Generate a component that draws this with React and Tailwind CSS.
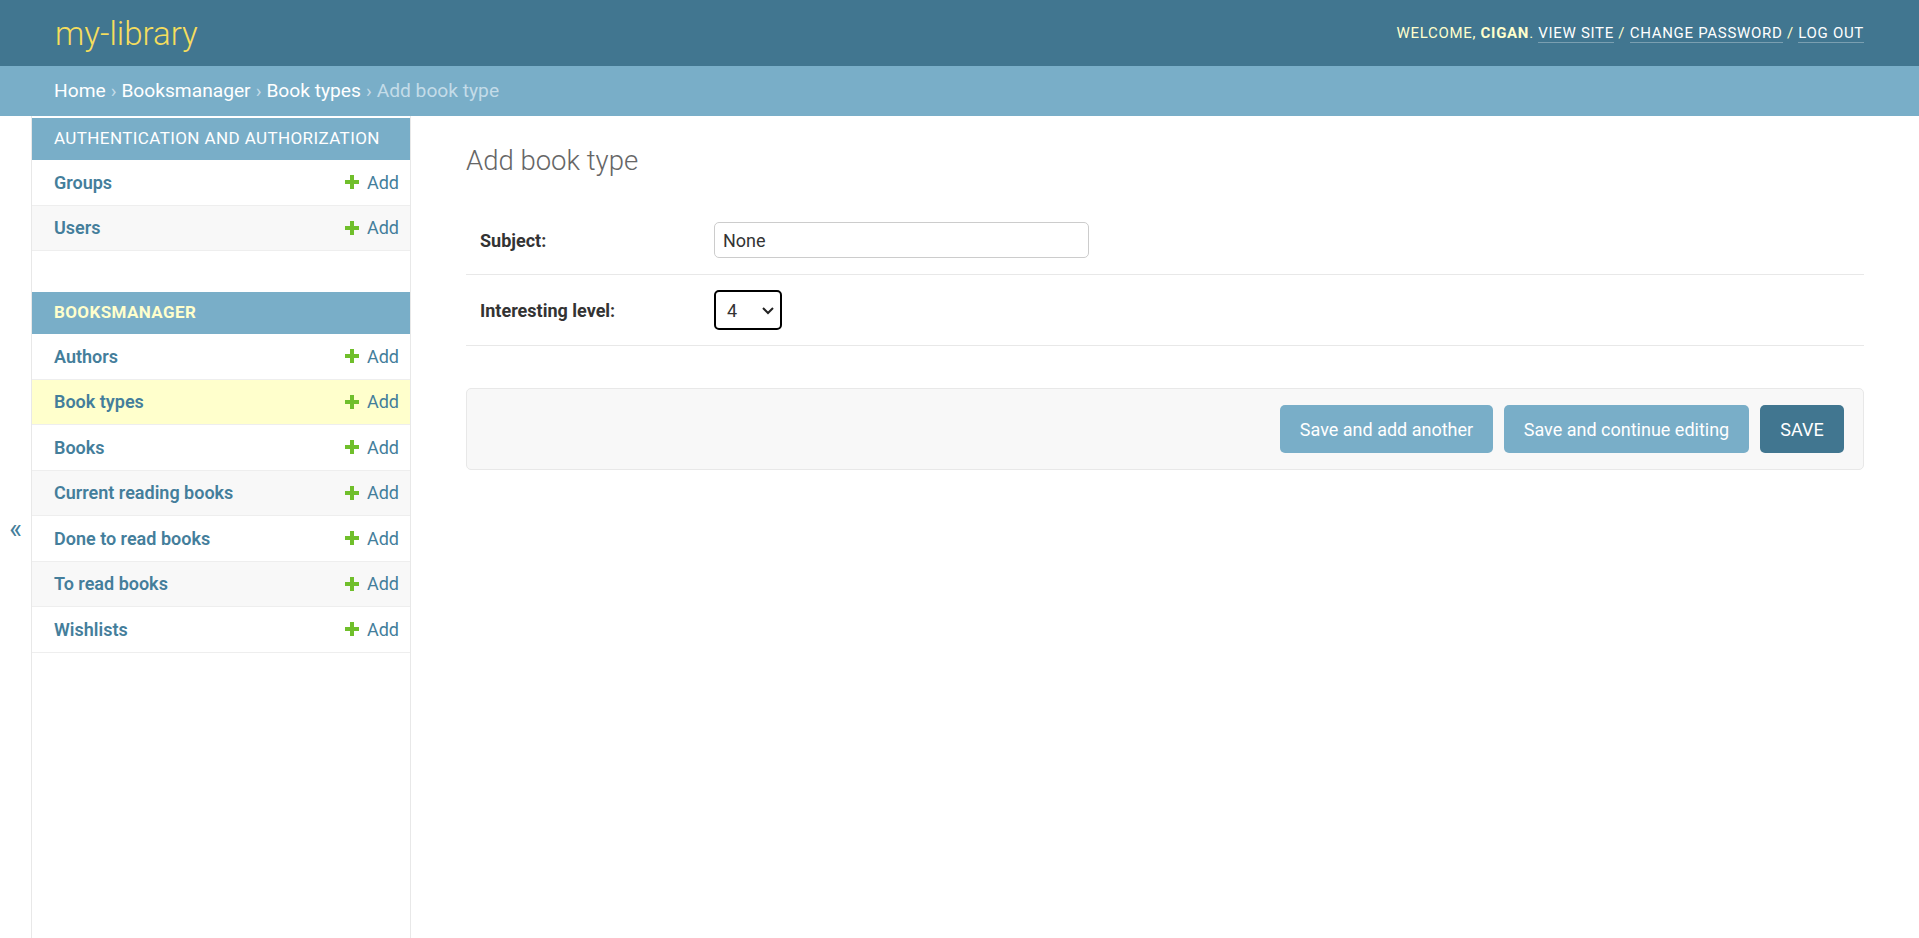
import React from "react";

const authModels = ["Groups", "Users"];
const bookModels = [
  "Authors",
  "Book types",
  "Books",
  "Current reading books",
  "Done to read books",
  "To read books",
  "Wishlists",
];

function PlusIcon() {
  return (
    <svg width="14" height="14" viewBox="0 0 14 14" className="shrink-0">
      <path d="M5 0h4v5h5v4H9v5H5V9H0V5h5z" fill="#70bf2b" />
    </svg>
  );
}

function ModelRow({ name, index, current }) {
  let bg = index % 2 === 0 ? "bg-white" : "bg-[#f8f8f8]";
  if (current) bg = "bg-[#ffffcc]";
  return (
    <div
      className={`flex items-center justify-between h-[45.5px] pl-[22px] pr-[11px] border-b-[1.5px] border-[#eeeeee] ${bg}`}
    >
      <a className="text-[18px] font-semibold text-[#447e9b] leading-[23px]">
        {name}
      </a>
      <a className="flex items-center gap-[8px] text-[18px] text-[#447e9b] leading-[23px]">
        <PlusIcon />
        Add
      </a>
    </div>
  );
}

function Module({ title, models, currentApp, currentModel }) {
  return (
    <div className="mb-[41px]">
      <div
        className={`h-[42px] flex items-center px-[22px] bg-[#79aec8] text-[17px] uppercase tracking-[0.4px] whitespace-nowrap ${
          currentApp ? "text-[#ffffcc] font-bold" : "text-white"
        }`}
      >
        {title}
      </div>
      {models.map((m, i) => (
        <ModelRow key={m} name={m} index={i} current={m === currentModel} />
      ))}
    </div>
  );
}

export default function App() {
  return (
    <div
      className="h-screen flex flex-col bg-white text-[#333]"
      style={{ fontFamily: "Roboto, 'Liberation Sans', sans-serif" }}
    >
      <header className="h-[66px] shrink-0 bg-[#417690] flex items-center justify-between px-[55px]">
        <div className="text-[33px] font-light text-[#f5dd5d] leading-none">
          my-library
        </div>
        <div className="text-[15px] uppercase tracking-[0.7px] text-[#ffffcc]">
          Welcome, <strong className="font-bold">cigan</strong>.{" "}
          <a className="text-white border-b border-white/30">View site</a> /{" "}
          <a className="text-white border-b border-white/30">Change password</a>{" "}
          / <a className="text-white border-b border-white/30">Log out</a>
        </div>
      </header>

      <div className="h-[50px] shrink-0 bg-[#79aec8] flex items-center px-[54px] text-[19.2px] text-[#c4dce8]">
        <a className="text-white">Home</a>
        <span className="mx-[5px]">›</span>
        <a className="text-white">Booksmanager</a>
        <span className="mx-[5px]">›</span>
        <a className="text-white">Book types</a>
        <span className="mx-[5px]">›</span>
        <span>Add book type</span>
      </div>

      <div className="flex flex-1 min-h-0">
        <button className="w-[32px] shrink-0 border-r border-[#e8e8e8] flex items-center justify-center text-[27px] leading-none text-[#447e9b] pt-[4px]">
          «
        </button>

        <nav className="w-[379px] shrink-0 border-r-[1.5px] border-[#e8e8e8] pt-[2px]">
          <Module title="Authentication and Authorization" models={authModels} />
          <Module
            title="Booksmanager"
            models={bookModels}
            currentApp
            currentModel="Book types"
          />
        </nav>

        <main className="flex-1 px-[55px] pt-[27px]">
          <h1 className="text-[27.5px] font-light text-[#666] leading-[34px] mt-[1px] mb-[28px]">
            Add book type
          </h1>

          <div className="border-b-[1.5px] border-[#e8e8e8] h-[69px] flex items-center px-[14px]">
            <label className="w-[234px] shrink-0 text-[18px] font-bold text-[#333]">
              Subject:
            </label>
            <input
              defaultValue="None"
              className="w-[375px] h-[36px] px-[8px] text-[18px] text-[#333] border border-[#cccccc] rounded-[5px] outline-none"
            />
          </div>

          <div className="border-b-[1.5px] border-[#e8e8e8] h-[71px] flex items-center px-[14px]">
            <label className="w-[234px] shrink-0 text-[18px] font-bold text-[#333]">
              Interesting level:
            </label>
            <div className="w-[68px] h-[40px] border-2 border-black rounded-[5px] flex items-center justify-between pl-[11px] pr-[5px] text-[18px] text-[#333]">
              <span>4</span>
              <svg width="14" height="14" viewBox="0 0 14 14">
                <path
                  d="M2 5l5 5 5-5"
                  fill="none"
                  stroke="#222"
                  strokeWidth="2"
                />
              </svg>
            </div>
          </div>

          <div className="mt-[42px] h-[82px] bg-[#f8f8f8] border-[1.5px] border-[#e8e8e8] rounded-[5px] flex items-center justify-end gap-[11px] px-[19px]">
            <button className="h-[48px] w-[213px] rounded-[5px] bg-[#79aec8] text-white text-[18px]">
              Save and add another
            </button>
            <button className="h-[48px] w-[245px] rounded-[5px] bg-[#79aec8] text-white text-[18px]">
              Save and continue editing
            </button>
            <button className="h-[48px] w-[84px] rounded-[5px] bg-[#417690] text-white text-[18px] uppercase">
              Save
            </button>
          </div>
        </main>
      </div>
    </div>
  );
}
